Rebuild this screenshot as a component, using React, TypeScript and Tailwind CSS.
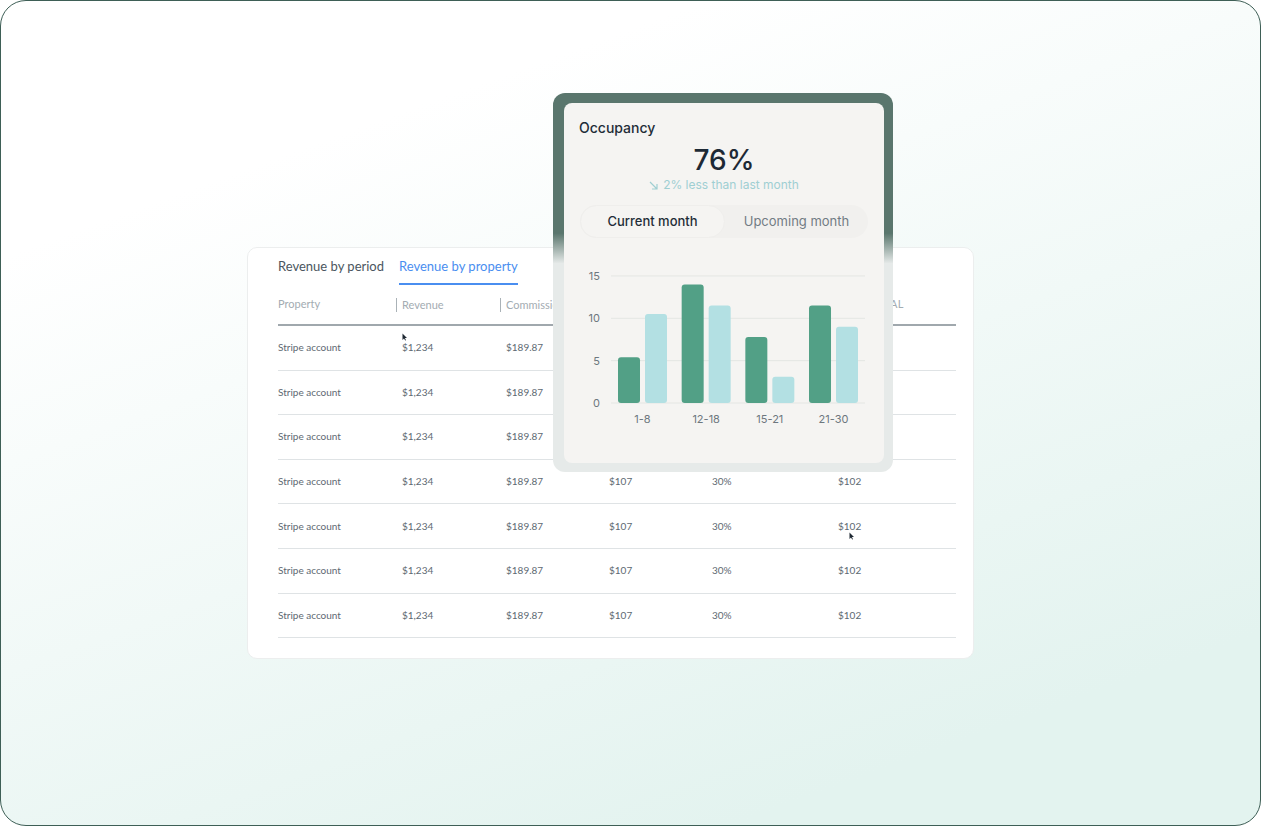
import React from "react"

const COLS = "grid grid-cols-[118px_104px_103px_103px_126px_1fr]"

const rows = Array.from({ length: 7 }, () => ({
  property: "Stripe account",
  revenue: "$1,234",
  commission: "$189.87",
  fees: "$107",
  rate: "30%",
  net: "$102",
}))

// chart data: dark = current, light = compare
const groups = [
  { label: "1-8", dark: 5.4, light: 10.5 },
  { label: "12-18", dark: 14, light: 11.5 },
  { label: "15-21", dark: 7.8, light: 3.1 },
  { label: "21-30", dark: 11.5, light: 9 },
]

function Cursor() {
  return (
    <svg width="6" height="8" viewBox="0 0 6 8">
      <path d="M0.5 0.5 L0.5 7 L2 5.5 L3.2 7.6 L4 7.2 L2.9 5.1 L5 5 Z" fill="#1f2933" />
    </svg>
  )
}

function OccupancyChart() {
  const y0 = 141
  const unit = 8.47
  return (
    <svg width="320" height="175" viewBox="0 0 320 175" className="block">
      {[0, 5, 10, 15].map((v) => {
        const y = y0 - v * unit
        return (
          <g key={v}>
            <line x1="47" x2="301" y1={y} y2={y} stroke="#e4e6e3" strokeWidth="1" />
            <text x="36" y={y + 4} textAnchor="end" fontSize="11" fill="#6d777e" fontFamily="Inter, sans-serif">
              {v}
            </text>
          </g>
        )
      })}
      {groups.map((g, i) => {
        const x = 54 + i * 63.67
        const hd = g.dark * unit
        const hl = g.light * unit
        return (
          <g key={g.label}>
            <rect x={x} y={y0 - hd} width="22" height={hd} rx="3" fill="#52a086" />
            <rect x={x + 27} y={y0 - hl} width="22" height={hl} rx="3" fill="#b3e0e3" />
            <text x={x + 24.5} y="161" textAnchor="middle" fontSize="11" fill="#6d777e" fontFamily="Inter, sans-serif">
              {g.label}
            </text>
          </g>
        )
      })}
    </svg>
  )
}

function OccupancyCard() {
  return (
    <div className="absolute left-[552px] top-[92px] w-[340px] h-[379px] rounded-[12px] pt-[10px] pl-[11px] pr-[9px] pb-[9px] bg-[linear-gradient(to_bottom,#5a766d_0%,#5a766d_37%,#e6eae9_45%,#e6eae9_100%)] font-['Inter',sans-serif]">
      <div className="h-full rounded-[8px] bg-[#f5f4f2] flex flex-col">
        <div className="pl-[15px] pt-[15px] text-[14px] leading-[20px] font-medium text-[#1f2d38]">Occupancy</div>
        <div className="text-center text-[28px] leading-[32px] font-medium text-[#1d2935] mt-[6px]">76%</div>
        <div className="flex justify-center items-center gap-[5px] text-[12px] leading-[16px] text-[#9fcfd2] mt-[1px]">
          <svg width="9" height="9" viewBox="0 0 9 9" fill="none" stroke="#9fcfd2" strokeWidth="1.2">
            <path d="M1 1 L8 8 M8 3 L8 8 L3 8" />
          </svg>
          <span>2% less than last month</span>
        </div>
        <div className="mx-[16px] mt-[12px] h-[33px] rounded-full bg-[#f1f0ee] flex text-[13px]">
          <div className="flex-1 rounded-full bg-[#f5f4f2] border border-[#efeeec] flex items-center justify-center font-medium text-[#1f2d38]">
            Current month
          </div>
          <div className="flex-1 flex items-center justify-center text-[#717c84]">Upcoming month</div>
        </div>
        <div className="mt-[24px]">
          <OccupancyChart />
        </div>
      </div>
    </div>
  )
}

function RevenueTable() {
  return (
    <div className="ml-[246px] mt-[246px] w-[727px] h-[412px] bg-white rounded-[10px] border border-[#eceeee] pl-[30px] pr-[17px] pt-[8px] font-['Lato',sans-serif]">
      <div className="flex gap-[15px] text-[13px] leading-[20px]">
        <div className="pb-[9px] text-[#4b5660]">Revenue by period</div>
        <div className="pb-[7px] text-[#4a8ef0] border-b-2 border-[#4a8ef0]">Revenue by property</div>
      </div>
      <div className={`${COLS} h-[41px] items-center text-[11px] text-[#a3acb2] border-b-2 border-[#a0a8ad]`}>
        <div>Property</div>
        <div>
          <span className="block border-l border-[#aab2b7] pl-[5px] leading-[14px]">Revenue</span>
        </div>
        <div>
          <span className="block border-l border-[#aab2b7] pl-[5px] leading-[14px]">Commission</span>
        </div>
        <div>
          <span className="block border-l border-[#aab2b7] pl-[5px] leading-[14px]">Fees</span>
        </div>
        <div>
          <span className="block border-l border-[#aab2b7] pl-[5px] leading-[14px]">Rate</span>
        </div>
        <div className="text-right pr-[52px] tracking-[0.5px]">TOTAL</div>
      </div>
      {rows.map((r, i) => (
        <div key={i} className={`${COLS} h-[44.6px] items-center text-[10px] text-[#5e6972] border-b border-[#dfe3e5]`}>
          <div>{r.property}</div>
          <div className="pl-[6px] relative">
            {r.revenue}
            {i === 0 && (
              <span className="absolute left-[6px] top-[-7px]">
                <Cursor />
              </span>
            )}
          </div>
          <div className="pl-[6px]">{r.commission}</div>
          <div className="pl-[6px]">{r.fees}</div>
          <div className="pl-[6px]">{r.rate}</div>
          <div className="pl-[6px] relative">
            {r.net}
            {i === 4 && (
              <span className="absolute left-[17px] top-[13px]">
                <Cursor />
              </span>
            )}
          </div>
        </div>
      ))}
    </div>
  )
}

export default function App() {
  return (
    <div className="w-[1261px] h-[826px] bg-white">
      <div className="relative w-full h-full rounded-[26px] border border-[#3e5f56] bg-[linear-gradient(160deg,#ffffff_20%,#e3f3ef_85%)] overflow-hidden">
        <RevenueTable />
        <OccupancyCard />
      </div>
    </div>
  )
}
